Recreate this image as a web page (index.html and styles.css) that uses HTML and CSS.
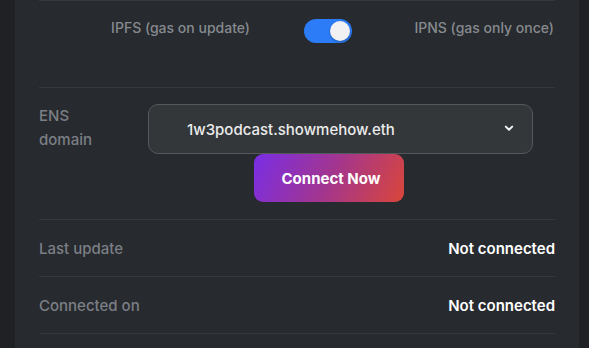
FILE: index.html
```html
<!DOCTYPE html>
<html lang="en">
<head>
<meta charset="utf-8">
<title>ENS connection</title>
<link rel="stylesheet" href="styles.css">
</head>
<body>
<div class="page">
  <section class="card">
    <div class="row toggle-row">
      <span class="opt opt-left">IPFS (gas on update)</span>
      <span class="switch" role="switch" aria-checked="true"><span class="knob"></span></span>
      <span class="opt opt-right">IPNS (gas only once)</span>
    </div>
    <div class="row ens-row">
      <div class="label ens-label">ENS domain</div>
      <div class="ens-controls">
        <div class="select">
          <span class="select-text">1w3podcast.showmehow.eth</span>
          <svg class="chevron" width="10" height="7" viewBox="0 0 10 7"><path d="M1.8 1.6 L5 4.8 L8.2 1.6" fill="none" stroke="#f2f2f2" stroke-width="2" stroke-linecap="round" stroke-linejoin="round"/></svg>
        </div>
        <button class="connect">Connect Now</button>
      </div>
    </div>
    <div class="row info-row">
      <span class="label">Last update</span>
      <span class="value">Not connected</span>
    </div>
    <div class="row info-row">
      <span class="label">Connected on</span>
      <span class="value">Not connected</span>
    </div>
  </section>
</div>
</body>
</html>
```
FILE: styles.css
```css
* { box-sizing: border-box; }
html, body {
  margin: 0;
  padding: 0;
  background: #1f2124;
  font-family: Inter, "Noto Sans", sans-serif;
  font-size: 15px;
  overflow: hidden;
}
.page {
  height: 348px;
  padding-left: 15px;
}
.card {
  width: 564px;
  height: 348px;
  background: #272a2e;
  padding: 0 24px;
}
.row {
  border-bottom: 1px solid #34373c;
}
.toggle-row {
  border-top: 1px solid #34373c;
  height: 88px;
  padding: 17px 1px 0 0;
  display: grid;
  grid-template-columns: 211px 48px 1fr;
  column-gap: 54px;
  align-items: start;
}
.opt {
  color: #868a8f;
  font-size: 14px;
  font-weight: 500;
  line-height: 20px;
  text-align: right;
  white-space: nowrap;
}
.switch {
  margin-top: 1px;
  width: 48px;
  height: 24px;
  border-radius: 12px;
  background: #2b7cf6;
  display: flex;
  align-items: center;
  justify-content: flex-end;
  padding-right: 2px;
}
.knob {
  width: 20px;
  height: 20px;
  border-radius: 50%;
  background: #f1f1f3;
  box-shadow: 0 1px 2px rgba(0,0,0,0.3);
}
.ens-row {
  display: flex;
  align-items: flex-start;
  padding: 16px 0 17px;
}
.label {
  color: #7b7f85;
  font-weight: 500;
}
.ens-label {
  width: 80px;
  margin-right: 29px;
  line-height: 24px;
}
.ens-controls {
  flex: 1;
  display: flex;
  flex-direction: column;
  align-items: flex-start;
}
.select {
  width: 385px;
  height: 50px;
  border: 1px solid #55595e;
  border-radius: 10px;
  background: #33373a;
  display: flex;
  align-items: center;
  justify-content: space-between;
  padding: 0 18px 0 38px;
}
.select-text {
  color: #ebebeb;
  font-weight: 500;
}
.chevron { display: block; margin-top: -1px; }
.connect {
  margin-left: 106px;
  width: 150px;
  height: 48px;
  border: none;
  border-radius: 9px;
  background: linear-gradient(115deg, #7a2ee6 0%, #a2358f 50%, #d9463a 100%);
  color: #ffffff;
  font-family: inherit;
  font-size: 15px;
  font-weight: 700;
  padding: 0;
  padding-left: 4px;
}
.info-row {
  height: 57px;
  display: flex;
  align-items: center;
  justify-content: space-between;
}
.value {
  color: #ffffff;
  font-weight: 600;
}
```
